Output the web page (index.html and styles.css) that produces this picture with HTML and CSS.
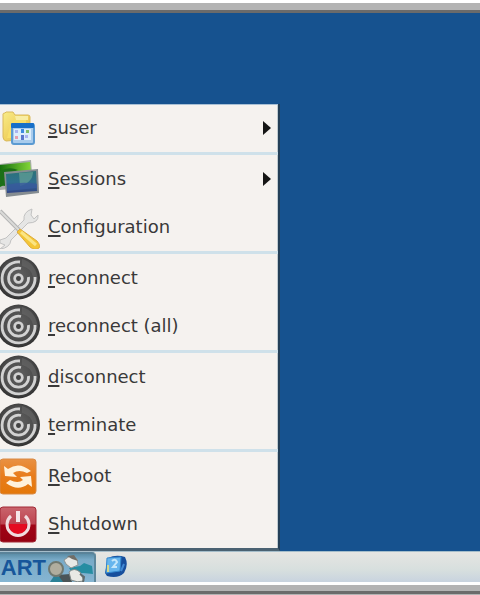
FILE: index.html
```html
<!DOCTYPE html>
<html lang="en">
<head>
<meta charset="utf-8">
<title>Desktop</title>
<link rel="stylesheet" href="styles.css">
</head>
<body>
<svg class="defs" aria-hidden="true">
  <defs>
    <radialGradient id="ball" cx="50%" cy="45%" r="55%">
      <stop offset="0" stop-color="#606060"/><stop offset="0.7" stop-color="#4c4c4c"/><stop offset="1" stop-color="#303030"/>
    </radialGradient>
    <linearGradient id="folder" x1="0" y1="0" x2="1" y2="1">
      <stop offset="0" stop-color="#f8ec88"/><stop offset="1" stop-color="#e9b93c"/>
    </linearGradient>
    <linearGradient id="green" x1="0" y1="0" x2="1" y2="0">
      <stop offset="0" stop-color="#16700e"/><stop offset="1" stop-color="#83d637"/>
    </linearGradient>
    <linearGradient id="screen" x1="0" y1="0" x2="0" y2="1">
      <stop offset="0" stop-color="#2a7378"/><stop offset="0.5" stop-color="#2f6f8f"/><stop offset="1" stop-color="#304386"/>
    </linearGradient>
    <linearGradient id="orange" x1="0" y1="0" x2="0" y2="1">
      <stop offset="0" stop-color="#e99143"/><stop offset="0.5" stop-color="#e87c1b"/><stop offset="1" stop-color="#e47809"/>
    </linearGradient>
    <linearGradient id="red" x1="0" y1="0" x2="0" y2="1">
      <stop offset="0" stop-color="#c9646c"/><stop offset="0.48" stop-color="#bd4450"/><stop offset="0.52" stop-color="#a00416"/><stop offset="1" stop-color="#950011"/>
    </linearGradient>
    <symbol id="swirl" viewBox="0 0 40 44">
      <circle cx="18.500" cy="22" r="21.500" fill="url(#ball)"/>
      <path d="M22 3Q36 7 38 24L33 21Q31 12 22 10Z" fill="#6b6b6b" opacity=".5"/>
      <g fill="none" stroke="#d2d2d2" stroke-width="2.800">
        <path d="M20 6A16.500 16.500 0 1 0 35 21"/>
        <path d="M21 12.500A10 10 0 1 0 28.500 21"/>
        <circle cx="18.500" cy="22.500" r="3.800"/>
      </g>
      <circle cx="18.500" cy="22.500" r="2.200" fill="#444"/>
    </symbol>
  </defs>
</svg>
<div class="frame">
  <div class="bezel bezel-top"></div>
  <main class="desktop">
    <nav class="menu" aria-label="Start menu">
      <div class="group">
        <button class="item">
          <svg class="icon" viewBox="0 0 40 44" aria-hidden="true">
            <path d="M3 8Q3 7 5 7L6 6H13L15 9H28Q30 9 30 11V33L6 35Q3 34 3 31Z" fill="url(#folder)" stroke="#d9b95c"/>
            <path d="M7 32L11 17Q15 11 26 13V32Z" fill="#f8df69"/>
            <path d="M15 10H28V14H16Z" fill="#f8eda4"/>
            <rect x="12" y="18" width="22" height="20" rx="2" fill="#a9cced" stroke="#5c9bd2" stroke-width="2"/>
            <rect x="11" y="17" width="23" height="5" rx="1" fill="#176fc8"/>
            <path d="M14 23H31V34H14Z" fill="#dcedfb"/>
            <path d="M15 24h3v3h-3zM25 29h3v3h-3z" fill="#a9b4ef"/><path d="M21 23h3v4h-3z" fill="#3d8cdf"/><path d="M26 24h3v3h-3z" fill="#81bd67"/><path d="M15 30h3v3h-3z" fill="#e59fae"/><path d="M21 29h3v5h-3z" fill="#5a77cb"/>
          </svg>
          <span class="label"><u>s</u>user</span><span class="arrow"></span>
        </button>
      </div>
      <div class="group">
        <button class="item">
          <svg class="icon" viewBox="0 0 40 44" aria-hidden="true">
            <path d="M0 7L31 3L33 30L0 33Z" fill="#a6aca8"/>
            <path d="M0 8L30 5L31 15L0 30Z" fill="url(#green)"/>
            <path d="M0 14Q9 9 18 13L6 17L5 29L0 28Z" fill="#1d6f18"/>
            <path d="M4 15L38 12L39 36L6 40Z" fill="#858c91"/>
            <path d="M6 17L36 14L37 34L7 36Z" fill="url(#screen)"/>
            <path d="M19 16L33 15Q33 25 20 29Z" fill="#69a597" opacity=".65"/>
            <path d="M7 28Q22 24 37 27V31L7 34Z" fill="#385b9d" opacity=".8"/>
          </svg>
          <span class="label"><u>S</u>essions</span><span class="arrow"></span>
        </button>
        <button class="item">
          <svg class="icon" viewBox="0 0 40 44" aria-hidden="true">
            <path d="M0 35L6 33L24 15Q23 7 32 4L31 10L34 14L38 10Q39 18 28 18L11 35Q10 43 0 44L5 40L0 38Z" fill="#e6e6e5" stroke="#c2c2c2"/>
            <path d="M0 6L19 25" stroke="#b2b2b2" stroke-width="4"/>
            <path d="M0 6L19 25" stroke="#dadad8" stroke-width="2"/>
            <path d="M17 27L20 24L37 36Q41 41 39 43Q35 46 30 42Z" fill="#f4c637" stroke="#dfac3b"/>
            <path d="M21 27L36 40" stroke="#fbe584" stroke-width="3"/>
          </svg>
          <span class="label"><u>C</u>onfiguration</span>
        </button>
      </div>
      <div class="group">
        <button class="item"><svg class="icon" aria-hidden="true"><use href="#swirl"/></svg><span class="label"><u>r</u>econnect</span></button>
        <button class="item"><svg class="icon" aria-hidden="true"><use href="#swirl"/></svg><span class="label"><u>r</u>econnect (all)</span></button>
      </div>
      <div class="group">
        <button class="item"><svg class="icon" aria-hidden="true"><use href="#swirl"/></svg><span class="label"><u>d</u>isconnect</span></button>
        <button class="item"><svg class="icon" aria-hidden="true"><use href="#swirl"/></svg><span class="label"><u>t</u>erminate</span></button>
      </div>
      <div class="group">
        <button class="item">
          <svg class="icon" viewBox="0 0 40 44" aria-hidden="true">
            <rect x="0" y="5" width="36" height="35" rx="3" fill="url(#orange)" stroke="#d98a44"/>
            <path d="M4 12L8 15Q19 7 31 17L27 19Q19 15 13 19L17 23L5 22Z" fill="#fff2dc"/>
            <path d="M32 33L28 30Q18 38 6 29L10 26Q18 30 23 26L20 23L31 22Z" fill="#fff2dc"/>
          </svg>
          <span class="label"><u>R</u>eboot</span>
        </button>
        <button class="item">
          <svg class="icon" viewBox="0 0 40 44" aria-hidden="true">
            <rect x="0" y="5" width="36" height="35" rx="3" fill="url(#red)" stroke="#a22a37"/>
            <path d="M9 22H27Q27 32 18 32Q9 32 9 22Z" fill="#e50b20"/>
            <path d="M11 14A11 11 0 1 0 25 14" fill="none" stroke="#f1dcdf" stroke-width="3"/>
            <path d="M18 9V20" stroke="#f6e7e8" stroke-width="4"/>
          </svg>
          <span class="label"><u>S</u>hutdown</span>
        </button>
      </div>
    </nav>
  </main>
  <footer class="taskbar">
    <button class="start">
      <span class="start-text">ART</span>
      <svg class="mascot" viewBox="0 0 48 28" aria-hidden="true">
        <path d="M4 28L8 22L20 23L25 28Z" fill="#2b8197"/>
        <path d="M23 14L34 12L38 9L46 12L47 20L37 19L27 20Z" fill="#268da2"/>
        <path d="M12 21L24 20L26 28H17Z" fill="#4b5557"/>
        <ellipse cx="10" cy="15" rx="7" ry="7" fill="#b0ad9e" stroke="#70786f" stroke-width="2"/>
        <path d="M23 18Q28 13 34 18L38 27Q31 29 25 26Z" fill="#e8e9e5" stroke="#808887"/>
        <path d="M18 6L24 2L31 5L32 11L25 14L20 10Z" fill="#e8e9e6" stroke="#8e9493"/>
        <path d="M21 2L28 1L32 7L26 5Z" fill="#706e68"/>
        <path d="M34 20L38 23L37 28" fill="none" stroke="#606a6c" stroke-width="2"/>
      </svg>
    </button>
    <button class="launcher" aria-label="Launcher">
      <svg viewBox="0 0 24 26" aria-hidden="true">
        <path d="M4 4Q12 0 21 3Q25 11 20 19Q14 25 3 22L1 19Z" fill="#174f9d"/>
        <path d="M3 4L17 3L16 17L2 19Z" fill="#66b5ed" stroke="#3488ce"/>
        <path d="M8 7Q11 4 13 8L9 13H13" stroke="#c4e6fa" stroke-width="2" fill="none"/>
        <path d="M4 11V18" stroke="#d7d78b" stroke-width="2"/>
        <path d="M17 17L20 10" stroke="#4189d4" stroke-width="2"/>
      </svg>
    </button>
  </footer>
  <div class="bezel bezel-bottom"></div>
</div>
</body>
</html>
```
FILE: styles.css
```css
* { box-sizing: border-box; }
body { margin: 0; background: #fff; font-family: "DejaVu Sans", sans-serif; }
button { margin: 0; padding: 0; border: 0; background: none; font: inherit; color: inherit; }
svg { display: block; flex: none; }
.defs { position: absolute; width: 0; height: 0; }
.frame {
  display: flex;
  flex-direction: column;
  min-height: 100vh;
  padding-top: 3px;
}
.bezel { flex: none; height: 10px; }
.bezel-top {
  background: #b3b3b3;
  border-bottom: 3px solid #6b6b6b;
}
.bezel-bottom {
  margin-top: 3px;
  background: linear-gradient(#b3b3b3 6px, #6b6b6b 6px, #6b6b6b 9px, #b3b3b3 9px);
}
.desktop {
  display: flex;
  flex: 1;
  align-items: flex-end;
  background: #16528f;
}
.menu {
  width: 280px;
  background: #f5f2ef;
  border-right: 2px solid #233f58;
  border-bottom: 3px solid #4b6272;
  box-shadow: inset 0 1px #a9c0d5, inset -1px 0 #c0cbd0;
}
.group + .group { border-top: 3px solid #cfe1ea; }
.item {
  display: flex;
  align-items: center;
  gap: 8px;
  width: 100%;
  height: 48px;
  padding-right: 7px;
  text-align: left;
  font-size: 18px;
  line-height: 24px;
  color: #393939;
}
.icon { width: 40px; height: 44px; }
.label { flex: 1; }
.label u { text-decoration-thickness: 2px; text-underline-offset: 2px; }
.arrow {
  border-left: 8px solid #151515;
  border-top: 7px solid transparent;
  border-bottom: 7px solid transparent;
}
.taskbar {
  display: flex;
  align-items: center;
  gap: 8px;
  height: 31px;
  border-top: 1px solid #a5bdca;
  background: linear-gradient(#e6e5e2, #d7dfde 60%, #c8d3df);
}
.start {
  display: flex;
  align-items: center;
  width: 96px;
  height: 30px;
  background: linear-gradient(#5b8ea8, #78aac7 20%, #86b5d2);
  border-right: 2px solid #5d879c;
  border-top: 2px solid #5a8399;
  border-radius: 0 4px 0 0;
}
.start-text {
  width: 46px;
  font: bold 22px/28px "Liberation Sans", sans-serif;
  text-align: right;
  color: #17569a;
}
.mascot { width: 48px; height: 28px; }
.launcher svg { width: 24px; height: 26px; }
```
